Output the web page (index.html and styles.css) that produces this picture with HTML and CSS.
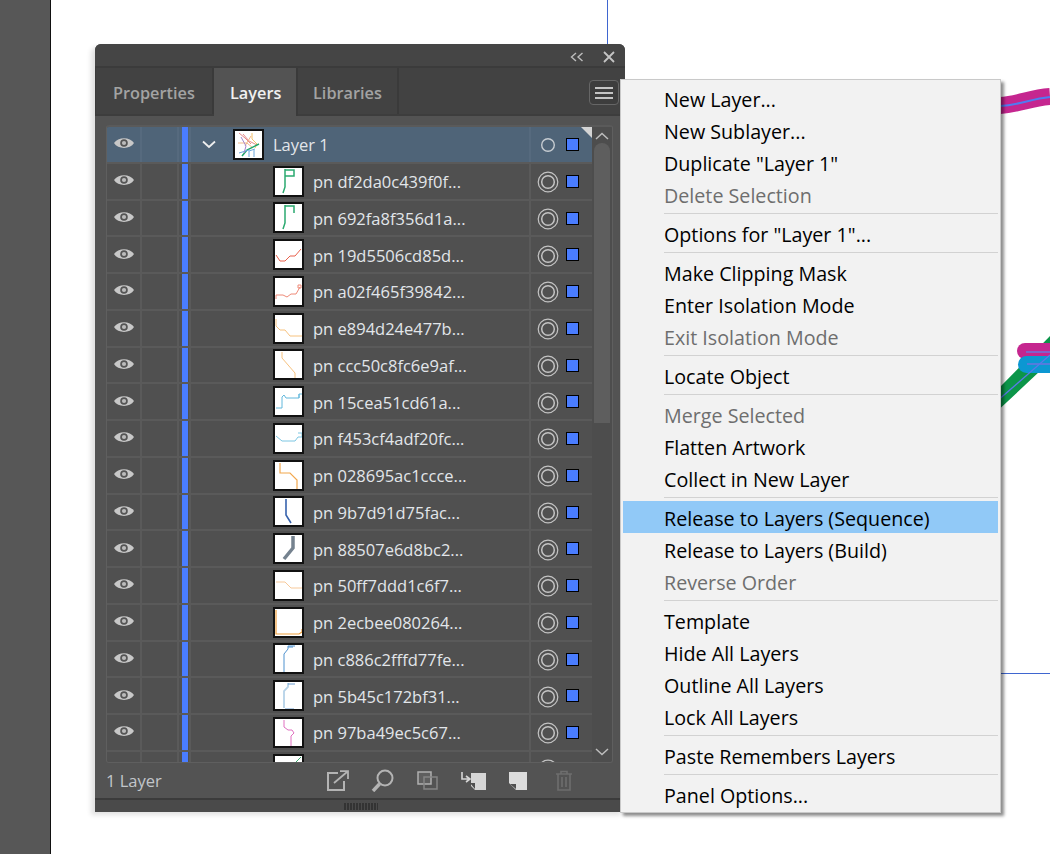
FILE: index.html
```html
<!DOCTYPE html>
<html lang="en">
<head>
    <meta charset="UTF-8">
    <title>Layers panel menu</title>
    <link rel="stylesheet" href="styles.css">
</head>
<body>
    <div class="toolbar-strip"></div>

    <!-- artwork on the canvas, behind the panel -->
    <svg class="artboard" width="1050" height="854" viewBox="0 0 1050 854">
        <path d="M607.500 0V44" stroke="#3f66d0" fill="none"/>
        <path d="M1000 673.500H1050" stroke="#3f66d0" fill="none"/>
        <path d="M1000 105.500C1020 104 1030 98 1050 96.500" stroke="#c5268f" stroke-width="17" fill="none"/>
        <path d="M1000 106C1020 105 1030 99 1050 97" stroke="#4f7cf2" stroke-width="2" fill="none"/>
        <path d="M1000 387L1052 334V365L1040 371L1000 408.600Z" fill="#0b9549"/>
        <path d="M1025 351H1050" stroke="#c5268f" stroke-width="16" stroke-linecap="round" fill="none"/>
        <path d="M1026.500 364.500H1050" stroke="#0c97d2" stroke-width="17" stroke-linecap="round" fill="none"/>
        <path d="M1026 352H1050M1027 364H1050" stroke="#6b74e0" stroke-width="1.500" fill="none"/>
        <path d="M1000 398.500L1050 355" stroke="#5a78ea" stroke-width="1.300" fill="none"/>
    </svg>

    <div class="panel">
        <div class="panel-title">
            <svg class="title-icon" width="14" height="10" viewBox="0 0 14 10"><path d="M6 1L1.500 5L6 9M12.500 1L8 5L12.500 9" stroke="#bdbdbd" stroke-width="1.400" fill="none"/></svg>
            <svg class="title-icon" width="12" height="12" viewBox="0 0 12 12"><path d="M1 1L11 11M11 1L1 11" stroke="#c4c4c4" stroke-width="1.800" fill="none"/></svg>
        </div>
        <div class="tabs">
            <div class="tab">Properties</div>
            <div class="tab active">Layers</div>
            <div class="tab">Libraries</div>
            <div class="menu-btn"><span></span><span></span><span></span></div>
        </div>
        <div class="panel-body">
            <div class="list-frame">
                <div class="rows">
                    <div class="row selected">
                        <div class="cell eye"><svg width="22" height="14" viewBox="0 0 22 14"><use href="#eye"/></svg></div>
                        <div class="cell lock"></div>
                        <div class="cell bar"><i></i></div>
                        <div class="cell name">
                            <svg class="chev" width="14" height="9" viewBox="0 0 14 9"><path d="M1 1.500L7 7L13 1.500" stroke="#eee" stroke-width="1.800" fill="none"/></svg>
                            <svg class="thumb" viewBox="0 0 27 27">
                                <path d="M4 2L10 7L16 13M8 3L14 10L22 14" stroke="#e58a8a" fill="none"/>
                                <path d="M17 2V8L22 13L20 17" stroke="#f5c26b" fill="none"/>
                                <path d="M3 12H12L18 17M10 15L16 5" stroke="#f2b98a" fill="none"/>
                                <path d="M7 25L12 19L24 13" stroke="#1fa56b" stroke-width="1.500" fill="none"/>
                                <path d="M14 26V20L20 18M19 26V19M4 22L14 19" stroke="#6aa7dd" fill="none"/>
                                <path d="M6 6L11 15L9 22" stroke="#a585cc" fill="none"/>
                            </svg>
                            <span class="label">Layer 1</span>
                        </div>
                        <div class="cell target">
                            <svg width="16" height="16" viewBox="0 0 16 16"><circle cx="8" cy="8" r="6.300" stroke="#c6ccd2" stroke-width="1.400" fill="none"/></svg>
                            <b class="swatch"></b><em class="corner"></em>
                        </div>
                    </div>
                    <div class="row">
                        <div class="cell eye"><svg width="22" height="14" viewBox="0 0 22 14"><use href="#eye"/></svg></div>
                        <div class="cell lock"></div>
                        <div class="cell bar"><i></i></div>
                        <div class="cell name">
                            <svg class="thumb" viewBox="0 0 27 27"><path d="M10 1V19L8 25M10 2H19V8H10" stroke="#2aa96f" stroke-width="1.500" fill="none"/></svg>
                            <span class="label">pn df2da0c439f0f...</span>
                        </div>
                        <div class="cell target"><svg width="22" height="22" viewBox="0 0 22 22"><use href="#rings"/></svg><b class="swatch"></b></div>
                    </div>
                    <div class="row">
                        <div class="cell eye"><svg width="22" height="14" viewBox="0 0 22 14"><use href="#eye"/></svg></div>
                        <div class="cell lock"></div>
                        <div class="cell bar"><i></i></div>
                        <div class="cell name">
                            <svg class="thumb" viewBox="0 0 27 27"><path d="M10 1V19L8 25M10 2H19V9" stroke="#2aa96f" stroke-width="1.500" fill="none"/></svg>
                            <span class="label">pn 692fa8f356d1a...</span>
                        </div>
                        <div class="cell target"><svg width="22" height="22" viewBox="0 0 22 22"><use href="#rings"/></svg><b class="swatch"></b></div>
                    </div>
                    <div class="row">
                        <div class="cell eye"><svg width="22" height="14" viewBox="0 0 22 14"><use href="#eye"/></svg></div>
                        <div class="cell lock"></div>
                        <div class="cell bar"><i></i></div>
                        <div class="cell name">
                            <svg class="thumb" viewBox="0 0 27 27"><path d="M1 14L5 20H10L15 15H20L26 8" stroke="#e8604c" fill="none"/></svg>
                            <span class="label">pn 19d5506cd85d...</span>
                        </div>
                        <div class="cell target"><svg width="22" height="22" viewBox="0 0 22 22"><use href="#rings"/></svg><b class="swatch"></b></div>
                    </div>
                    <div class="row">
                        <div class="cell eye"><svg width="22" height="14" viewBox="0 0 22 14"><use href="#eye"/></svg></div>
                        <div class="cell lock"></div>
                        <div class="cell bar"><i></i></div>
                        <div class="cell name">
                            <svg class="thumb" viewBox="0 0 27 27"><path d="M1 21V17H8L12 19L16 16H21L25 9M23 7H26V10H23Z" stroke="#ee8a78" fill="none"/></svg>
                            <span class="label">pn a02f465f39842...</span>
                        </div>
                        <div class="cell target"><svg width="22" height="22" viewBox="0 0 22 22"><use href="#rings"/></svg><b class="swatch"></b></div>
                    </div>
                    <div class="row">
                        <div class="cell eye"><svg width="22" height="14" viewBox="0 0 22 14"><use href="#eye"/></svg></div>
                        <div class="cell lock"></div>
                        <div class="cell bar"><i></i></div>
                        <div class="cell name">
                            <svg class="thumb" viewBox="0 0 27 27"><path d="M1 4V11L5 15H10L15 21H27" stroke="#f7c27f" fill="none"/></svg>
                            <span class="label">pn e894d24e477b...</span>
                        </div>
                        <div class="cell target"><svg width="22" height="22" viewBox="0 0 22 22"><use href="#rings"/></svg><b class="swatch"></b></div>
                    </div>
                    <div class="row">
                        <div class="cell eye"><svg width="22" height="14" viewBox="0 0 22 14"><use href="#eye"/></svg></div>
                        <div class="cell lock"></div>
                        <div class="cell bar"><i></i></div>
                        <div class="cell name">
                            <svg class="thumb" viewBox="0 0 27 27"><path d="M7 1V7L20 22V27" stroke="#f7c27f" fill="none"/></svg>
                            <span class="label">pn ccc50c8fc6e9af...</span>
                        </div>
                        <div class="cell target"><svg width="22" height="22" viewBox="0 0 22 22"><use href="#rings"/></svg><b class="swatch"></b></div>
                    </div>
                    <div class="row">
                        <div class="cell eye"><svg width="22" height="14" viewBox="0 0 22 14"><use href="#eye"/></svg></div>
                        <div class="cell lock"></div>
                        <div class="cell bar"><i></i></div>
                        <div class="cell name">
                            <svg class="thumb" viewBox="0 0 27 27"><path d="M1 20H7V9L9 7L11 10H24V6H27M24 6V10" stroke="#62b8dc" fill="none"/></svg>
                            <span class="label">pn 15cea51cd61a...</span>
                        </div>
                        <div class="cell target"><svg width="22" height="22" viewBox="0 0 22 22"><use href="#rings"/></svg><b class="swatch"></b></div>
                    </div>
                    <div class="row">
                        <div class="cell eye"><svg width="22" height="14" viewBox="0 0 22 14"><use href="#eye"/></svg></div>
                        <div class="cell lock"></div>
                        <div class="cell bar"><i></i></div>
                        <div class="cell name">
                            <svg class="thumb" viewBox="0 0 27 27"><path d="M1 11L7 16H20L23 12H27M23 8H27V12" stroke="#7cc6e2" fill="none"/></svg>
                            <span class="label">pn f453cf4adf20fc...</span>
                        </div>
                        <div class="cell target"><svg width="22" height="22" viewBox="0 0 22 22"><use href="#rings"/></svg><b class="swatch"></b></div>
                    </div>
                    <div class="row">
                        <div class="cell eye"><svg width="22" height="14" viewBox="0 0 22 14"><use href="#eye"/></svg></div>
                        <div class="cell lock"></div>
                        <div class="cell bar"><i></i></div>
                        <div class="cell name">
                            <svg class="thumb" viewBox="0 0 27 27"><path d="M5 1V11H15L22 18V27" stroke="#f2a74d" stroke-width="1.200" fill="none"/></svg>
                            <span class="label">pn 028695ac1ccce...</span>
                        </div>
                        <div class="cell target"><svg width="22" height="22" viewBox="0 0 22 22"><use href="#rings"/></svg><b class="swatch"></b></div>
                    </div>
                    <div class="row">
                        <div class="cell eye"><svg width="22" height="14" viewBox="0 0 22 14"><use href="#eye"/></svg></div>
                        <div class="cell lock"></div>
                        <div class="cell bar"><i></i></div>
                        <div class="cell name">
                            <svg class="thumb" viewBox="0 0 27 27"><path d="M11 1V17L16 25" stroke="#3763ad" stroke-width="1.600" fill="none"/></svg>
                            <span class="label">pn 9b7d91d75fac...</span>
                        </div>
                        <div class="cell target"><svg width="22" height="22" viewBox="0 0 22 22"><use href="#rings"/></svg><b class="swatch"></b></div>
                    </div>
                    <div class="row">
                        <div class="cell eye"><svg width="22" height="14" viewBox="0 0 22 14"><use href="#eye"/></svg></div>
                        <div class="cell lock"></div>
                        <div class="cell bar"><i></i></div>
                        <div class="cell name">
                            <svg class="thumb" viewBox="0 0 27 27"><path d="M18 1V13L9 24" stroke="#75828f" stroke-width="3.500" fill="none"/></svg>
                            <span class="label">pn 88507e6d8bc2...</span>
                        </div>
                        <div class="cell target"><svg width="22" height="22" viewBox="0 0 22 22"><use href="#rings"/></svg><b class="swatch"></b></div>
                    </div>
                    <div class="row">
                        <div class="cell eye"><svg width="22" height="14" viewBox="0 0 22 14"><use href="#eye"/></svg></div>
                        <div class="cell lock"></div>
                        <div class="cell bar"><i></i></div>
                        <div class="cell name">
                            <svg class="thumb" viewBox="0 0 27 27"><path d="M1 10H10L16 16H27" stroke="#f7c99a" fill="none"/></svg>
                            <span class="label">pn 50ff7ddd1c6f7...</span>
                        </div>
                        <div class="cell target"><svg width="22" height="22" viewBox="0 0 22 22"><use href="#rings"/></svg><b class="swatch"></b></div>
                    </div>
                    <div class="row">
                        <div class="cell eye"><svg width="22" height="14" viewBox="0 0 22 14"><use href="#eye"/></svg></div>
                        <div class="cell lock"></div>
                        <div class="cell bar"><i></i></div>
                        <div class="cell name">
                            <svg class="thumb" viewBox="0 0 27 27"><path d="M1 1V25H24L27 23V20" stroke="#ee9f3d" stroke-width="1.200" fill="none"/></svg>
                            <span class="label">pn 2ecbee080264...</span>
                        </div>
                        <div class="cell target"><svg width="22" height="22" viewBox="0 0 22 22"><use href="#rings"/></svg><b class="swatch"></b></div>
                    </div>
                    <div class="row">
                        <div class="cell eye"><svg width="22" height="14" viewBox="0 0 22 14"><use href="#eye"/></svg></div>
                        <div class="cell lock"></div>
                        <div class="cell bar"><i></i></div>
                        <div class="cell name">
                            <svg class="thumb" viewBox="0 0 27 27"><path d="M9 27V9L13 4V1H20M13 2H18" stroke="#4f92cf" fill="none"/></svg>
                            <span class="label">pn c886c2fffd77fe...</span>
                        </div>
                        <div class="cell target"><svg width="22" height="22" viewBox="0 0 22 22"><use href="#rings"/></svg><b class="swatch"></b></div>
                    </div>
                    <div class="row">
                        <div class="cell eye"><svg width="22" height="14" viewBox="0 0 22 14"><use href="#eye"/></svg></div>
                        <div class="cell lock"></div>
                        <div class="cell bar"><i></i></div>
                        <div class="cell name">
                            <svg class="thumb" viewBox="0 0 27 27"><path d="M9 26V9L13 5V1" stroke="#b5d2e8" stroke-width="1.800" fill="none"/><path d="M13 2H20M10 27H19" stroke="#6b9ccf" fill="none"/></svg>
                            <span class="label">pn 5b45c172bf31...</span>
                        </div>
                        <div class="cell target"><svg width="22" height="22" viewBox="0 0 22 22"><use href="#rings"/></svg><b class="swatch"></b></div>
                    </div>
                    <div class="row">
                        <div class="cell eye"><svg width="22" height="14" viewBox="0 0 22 14"><use href="#eye"/></svg></div>
                        <div class="cell lock"></div>
                        <div class="cell bar"><i></i></div>
                        <div class="cell name">
                            <svg class="thumb" viewBox="0 0 27 27"><path d="M9 1V8L13 11H17L19 14L16 17V27" stroke="#e070c0" fill="none"/></svg>
                            <span class="label">pn 97ba49ec5c67...</span>
                        </div>
                        <div class="cell target"><svg width="22" height="22" viewBox="0 0 22 22"><use href="#rings"/></svg><b class="swatch"></b></div>
                    </div>
                    <div class="row">
                        <div class="cell eye"><svg width="22" height="14" viewBox="0 0 22 14"><use href="#eye"/></svg></div>
                        <div class="cell lock"></div>
                        <div class="cell bar"><i></i></div>
                        <div class="cell name">
                            <svg class="thumb" viewBox="0 0 27 27"><path d="M18 9L26 1" stroke="#3aa86f" fill="none"/></svg>
                            <span class="label"></span>
                        </div>
                        <div class="cell target"><svg width="22" height="22" viewBox="0 0 22 22"><use href="#rings"/></svg></div>
                    </div>
                </div>
                <div class="scrollbar">
                    <svg class="scroll-arrow" width="14" height="8" viewBox="0 0 14 8"><path d="M1 7L7 1.500L13 7" stroke="#bdbdbd" stroke-width="1.500" fill="none"/></svg>
                    <div class="scroll-track"><div class="scroll-thumb"></div></div>
                    <svg class="scroll-arrow" width="14" height="8" viewBox="0 0 14 8"><path d="M1 1L7 6.500L13 1" stroke="#bdbdbd" stroke-width="1.500" fill="none"/></svg>
                </div>
            </div>
            <div class="panel-footer">
                <span class="layer-count">1 Layer</span>
                <div class="footer-icons">
                    <svg width="22" height="21" viewBox="0 0 22 21"><path d="M11 3H1V20H17V11" stroke="#b4b4b4" stroke-width="2" fill="none"/><path d="M7 13L20 2M13 1.200H21V9" stroke="#b4b4b4" stroke-width="1.800" fill="none"/></svg>
                    <svg width="23" height="23" viewBox="0 0 23 23"><circle cx="14" cy="9" r="7.500" stroke="#b4b4b4" stroke-width="2" fill="none"/><path d="M8.500 15L2 22" stroke="#b4b4b4" stroke-width="3.500" fill="none"/></svg>
                    <svg width="21" height="19" viewBox="0 0 21 19"><rect x="1" y="1" width="13" height="12" stroke="#b0b0b0" stroke-width="1.500" fill="#5f5f5f"/><rect x="7" y="6" width="13" height="12" stroke="#858585" stroke-width="1.500" fill="none"/></svg>
                    <svg width="25" height="18" viewBox="0 0 25 18"><path d="M10 1H25V18H14L10 14Z" fill="#d6d6d6"/><path d="M1 0V7H8M5 4L9 7L5 10" stroke="#d6d6d6" stroke-width="1.600" fill="none"/><path d="M9 11L14 17V11Z" fill="#4f4f4f"/></svg>
                    <svg width="18" height="18" viewBox="0 0 18 18"><path d="M0 0H18V18H7L0 11Z" fill="#dcdcdc"/><path d="M1 12H7V17Z" fill="#4f4f4f"/></svg>
                    <svg width="18" height="21" viewBox="0 0 18 21"><path d="M1 4H17M6 4V1.500H12V4M3 4V20H15V4M7 7V17M11 7V17" stroke="#6e6e6e" stroke-width="1.600" fill="none"/></svg>
                </div>
            </div>
        </div>
        <div class="panel-grip"><span class="grip-dots"></span></div>
    </div>

    <div class="flyout">
        <div class="item">New Layer...</div>
        <div class="item">New Sublayer...</div>
        <div class="item">Duplicate "Layer 1"</div>
        <div class="item off">Delete Selection</div>
        <div class="sep"></div>
        <div class="item">Options for "Layer 1"...</div>
        <div class="sep"></div>
        <div class="item">Make Clipping Mask</div>
        <div class="item">Enter Isolation Mode</div>
        <div class="item off">Exit Isolation Mode</div>
        <div class="sep"></div>
        <div class="item">Locate Object</div>
        <div class="sep"></div>
        <div class="item off">Merge Selected</div>
        <div class="item">Flatten Artwork</div>
        <div class="item">Collect in New Layer</div>
        <div class="sep"></div>
        <div class="item hover">Release to Layers (Sequence)</div>
        <div class="item">Release to Layers (Build)</div>
        <div class="item off">Reverse Order</div>
        <div class="sep"></div>
        <div class="item">Template</div>
        <div class="item">Hide All Layers</div>
        <div class="item">Outline All Layers</div>
        <div class="item">Lock All Layers</div>
        <div class="sep"></div>
        <div class="item">Paste Remembers Layers</div>
        <div class="sep"></div>
        <div class="item">Panel Options...</div>
    </div>

    <svg class="defs" width="0" height="0">
        <defs>
            <g id="eye">
                <path d="M1 7C5 0.500 17 0.500 21 7C17 13.500 5 13.500 1 7Z" fill="#c8c8c8"/>
                <circle cx="11" cy="7" r="3.800" fill="#555"/>
                <circle cx="11" cy="7" r="2.100" fill="#bbb"/>
            </g>
            <g id="rings" fill="none" stroke="#c4c4c4">
                <circle cx="11" cy="11" r="9.800" stroke-width="1.200"/>
                <circle cx="11" cy="11" r="6.300" stroke-width="1.500"/>
            </g>
        </defs>
    </svg>
</body>
</html>
```

FILE: styles.css
```css
html, body {
    margin: 0;
    height: 100%;
}
body {
    position: relative;
    width: 1050px;
    height: 854px;
    overflow: hidden;
    background-color: #fff;
    font-family: "Open Sans", "Noto Sans", sans-serif;
}
.toolbar-strip {
    width: 50px;
    height: 100%;
    background-color: #575757;
    border-right: 1px solid #111;
}
.artboard {
    position: absolute;
    left: 0;
    top: 0;
}
.defs {
    position: absolute;
}

/* panel */
.panel {
    position: absolute;
    left: 95px;
    top: 44px;
    width: 530px;
    height: 768px;
    display: flex;
    flex-direction: column;
    background-color: #535353;
    border-radius: 6px 6px 0 0;
    box-shadow: -4px 3px 5px rgba(0, 0, 0, 0.12);
}
.panel-title {
    height: 24px;
    flex: none;
    box-sizing: border-box;
    display: flex;
    align-items: center;
    justify-content: flex-end;
    gap: 19px;
    padding: 3px 10px 0 0;
    background-color: #454545;
    border-radius: 6px 6px 0 0;
    border-bottom: 2px solid #3b3b3b;
}
.tabs {
    height: 48px;
    flex: none;
    box-sizing: border-box;
    display: flex;
    position: relative;
    background-color: #424242;
    border-left: 1px solid #3b3b3b;
    border-bottom: 2px solid #3d3d3d;
}
.tab {
    display: flex;
    align-items: center;
    box-sizing: border-box;
    padding: 4px 15px 0;
    font-size: 16.300px;
    font-weight: 600;
    color: #a3a3a3;
    border-right: 2px solid #3a3a3a;
}
.tab:nth-child(1) {
    width: 118px;
    padding-left: 17px;
}
.tab:nth-child(2) {
    width: 84px;
    padding-left: 16px;
}
.tab:nth-child(3) {
    width: 101px;
}
.tab.active {
    color: #f0f0f0;
    background-color: #535353;
    margin-bottom: -2px;
    padding-bottom: 2px;
}
.menu-btn {
    position: absolute;
    left: 493px;
    top: 12px;
    width: 30px;
    height: 25px;
    box-sizing: border-box;
    display: flex;
    flex-direction: column;
    justify-content: center;
    align-items: center;
    gap: 3px;
    background-color: #3d3d3d;
    border: 1px solid #666;
    border-radius: 4px;
}
.menu-btn span {
    width: 18px;
    height: 2px;
    background-color: #c4c4c4;
}
.panel-body {
    flex: 1;
    min-height: 0;
    display: flex;
    flex-direction: column;
    padding: 9px 12px 0 11px;
}

/* layer list */
.list-frame {
    height: 638px;
    flex: none;
    box-sizing: border-box;
    display: flex;
    overflow: hidden;
    border: 1px solid #5f5f5f;
    border-top: 2px solid #5a5a5a;
    border-radius: 3px;
}
.rows {
    width: 485px;
    flex: none;
    display: flex;
    flex-direction: column;
    overflow: hidden;
}
.row {
    flex: none;
    height: 36.75px;
    box-sizing: border-box;
    display: flex;
    border-bottom: 2px solid #5a5a5a;
    background-color: #505050;
}
.row.selected {
    background-color: #4f6478;
}
.cell {
    height: 100%;
    display: flex;
    align-items: center;
    box-sizing: border-box;
    border-right: 2px solid #5a5a5a;
}
.row.selected .cell {
    border-right-color: #566a7e;
}
.eye {
    width: 35px;
    justify-content: center;
    padding-bottom: 2px;
}
.lock {
    width: 37px;
}
.bar {
    width: 10px;
    padding-left: 3px;
    border-right: none;
    border-left: none;
}
.bar i {
    display: block;
    width: 5.500px;
    height: 100%;
    background-color: #4a7dff;
}
.name {
    width: 342px;
    padding-left: 82px;
    color: #e2e6ea;
    font-size: 16.500px;
    border-left: 2px solid #5a5a5a;
}
.row.selected .name {
    padding-left: 11px;
    border-left-color: #566a7e;
}
.chev {
    flex: none;
    margin-right: 17px;
}
.thumb {
    flex: none;
    width: 27px;
    height: 27px;
    background-color: #fff;
    border: 2px solid #111;
    margin-right: 9px;
}
.label {
    white-space: nowrap;
    margin-top: 1px;
}
.target {
    flex: 1;
    position: relative;
    border-right: none;
    padding: 2px 0 0 6px;
}
.row.selected .target {
    padding-left: 9px;
}
.swatch {
    position: absolute;
    left: 35px;
    top: 11px;
    width: 11px;
    height: 11px;
    background-color: #4a7dff;
    border: 1.500px solid #000;
}
.corner {
    position: absolute;
    right: 0;
    top: 0;
    border-top: 11px solid #d4d4d4;
    border-left: 11px solid transparent;
}

/* scrollbar */
.scrollbar {
    flex: 1;
    display: flex;
    flex-direction: column;
    align-items: center;
    padding: 5px 0 6px;
    background-color: #4d4d4d;
}
.scroll-track {
    flex: 1;
    width: 100%;
    padding: 3px 2px 0;
    box-sizing: border-box;
}
.scroll-thumb {
    height: 280px;
    background-color: #5e5e5e;
    border-radius: 8px 8px 0 0;
}

/* footer */
.panel-footer {
    flex: 1;
    display: flex;
    align-items: center;
    color: #c2c6ca;
    font-size: 16.500px;
}
.layer-count {
    width: 209px;
    flex: none;
}
.footer-icons {
    display: grid;
    grid-template-columns: repeat(6, 45.2px);
    justify-items: center;
    align-items: center;
}
.panel-grip {
    height: 14px;
    flex: none;
    box-sizing: border-box;
    display: flex;
    justify-content: center;
    align-items: center;
    background-color: #4a4a4a;
    border-top: 2px solid #3b3b3b;
}
.grip-dots {
    width: 34px;
    height: 7px;
    margin-left: 2px;
    background: repeating-linear-gradient(90deg, #333 0, #333 2px, transparent 2px, transparent 3px);
}

/* flyout menu */
.flyout {
    position: absolute;
    left: 620px;
    top: 79px;
    width: 381px;
    height: 734px;
    box-sizing: border-box;
    padding: 2px 2px 0;
    background-color: #f2f2f2;
    border: 1px solid #c9c9c9;
    box-shadow: 3px 3px 3px rgba(0, 0, 0, 0.45);
}
.item {
    height: 32px;
    box-sizing: border-box;
    display: flex;
    align-items: center;
    padding: 2px 0 0 41px;
    font-size: 19.700px;
    color: #000;
    white-space: nowrap;
}
.item.off {
    color: #6e6e6e;
}
.item.hover {
    background-color: #91c9f7;
}
.sep {
    height: 1px;
    margin: 3px 0 3px 41px;
    background-color: #d2d2d2;
}
```
